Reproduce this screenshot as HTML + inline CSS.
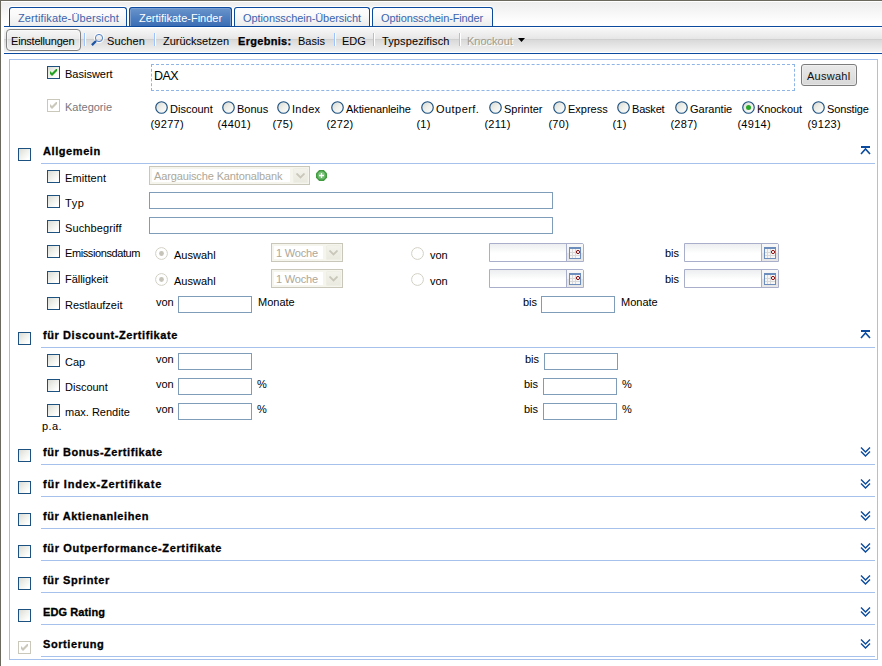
<!DOCTYPE html>
<html lang="de"><head><meta charset="utf-8"><title>Zertifikate-Finder</title>
<style>
html,body{margin:0;padding:0;background:#fff;}
body{width:882px;height:666px;overflow:hidden;position:relative;font-family:"Liberation Sans", sans-serif;font-size:11px;color:#000;}
div,span.t,svg{position:absolute;box-sizing:border-box;}
span.t{white-space:nowrap;}
.cb{width:13px;height:13px;border:1px solid #1c5180;background:linear-gradient(135deg,#dcdcd6 0%,#efefeb 45%,#ffffff 85%);}
.cbd{width:13px;height:13px;border:1px solid #cac8bb;background:#fff;}
.rb{width:13px;height:13px;}
.in{border:1px solid #7f9db9;background:#fff;}
.sel{border:1px solid #c9c7ba;background:#fff;}
.df{border-radius:0 2px 0 0;border:1px solid #a9aeca;background:linear-gradient(#eceeef 0%,#ffffff 55%);}
.sl{height:1px;background:#a6c2ec;left:41px;width:834px;}
.tab{top:7px;height:20px;border:1px solid #0b4a9c;border-bottom:none;border-radius:3px 3px 0 0;background:linear-gradient(#fdfdfd 0%,#fafafa 35%,#ebebeb 100%);box-shadow:0 0 0 1px #fff;}
.tab.act{background:linear-gradient(#6b95cb 0%,#4f7fc0 50%,#3a6cb4 100%);box-shadow:0 0 0 1px #fff, inset 0 0 0 1px #7aa0d3;}
.sep{background:#9cc3fa;box-shadow:1px 0 0 #fff;}
</style></head><body>
<div style="left:0px;top:0px;width:882px;height:666px;background:#fff;"></div>
<div style="left:1px;top:1px;width:881px;height:26px;background:linear-gradient(#ffffff 0px,#ffffff 1px,#eeeeee 1px,#f6f6f6 11px,#ffffff 22px);"></div>
<div style="left:0px;top:0px;width:882px;height:1px;background:#6b695d;"></div>
<div style="left:0px;top:0px;width:1px;height:666px;background:#6b695d;"></div>
<div class="tab" style="left:9px;top:7px;width:118px;height:20px;"></div>
<span class="t" style="left:18px;top:11px;font-size:11px;line-height:14px;color:#3b64ae;letter-spacing:0.12px;">Zertifikate-Übersicht</span>
<div class="tab act" style="left:129px;top:7px;width:103px;height:20px;"></div>
<span class="t" style="left:139px;top:11px;font-size:11px;line-height:14px;color:#fff;">Zertifikate-Finder</span>
<div class="tab" style="left:234px;top:7px;width:136px;height:20px;"></div>
<span class="t" style="left:243px;top:11px;font-size:11px;line-height:14px;color:#3b64ae;letter-spacing:-0.08px;">Optionsschein-Übersicht</span>
<div class="tab" style="left:372px;top:7px;width:121px;height:20px;"></div>
<span class="t" style="left:381px;top:11px;font-size:11px;line-height:14px;color:#3b64ae;letter-spacing:-0.12px;">Optionsschein-Finder</span>
<div style="left:4px;top:26px;width:878px;height:1px;background:#0b4a9c;"></div>
<div style="left:4px;top:27px;width:878px;height:26px;background:linear-gradient(#ffffff 0px,#ffffff 1px,#f8f8f8 1px,#e6e6e6 12px,#d0d0d0 12px,#d0d0d0 13px,#d9d9d9 13px,#f3f3f3 25px,#ffffff 25px);"></div>
<div style="left:4px;top:53px;width:878px;height:1px;background:#0b4a9c;"></div>
<div style="left:6px;top:29px;width:75px;height:22px;border:1px solid #838383;border-radius:4px;background:rgba(255,255,255,.18);box-shadow:inset 0 0 0 1px rgba(255,255,255,.45);"></div>
<span class="t" style="left:11px;top:34px;font-size:11px;line-height:14px;letter-spacing:-0.2px;">Einstellungen</span>
<div class="sep" style="left:84px;top:33px;width:1px;height:13px;"></div>
<svg style="left:90px;top:33px" width="14" height="14" viewBox="0 0 14 14"><circle cx="9" cy="5" r="4.6" fill="none" stroke="#fff" stroke-width="1.2" opacity=".8"/><circle cx="9" cy="5" r="3.6" fill="rgba(255,255,255,.25)" stroke="#4a7dc4" stroke-width="0.95"/><path d="M6 8 L1.9 12.1" stroke="#1f55a5" stroke-width="2.3"/></svg>
<span class="t" style="left:107px;top:34px;font-size:11px;line-height:14px;letter-spacing:0.1px;">Suchen</span>
<div class="sep" style="left:154px;top:33px;width:1px;height:13px;"></div>
<span class="t" style="left:163px;top:34px;font-size:11px;line-height:14px;">Zurücksetzen</span>
<span class="t" style="left:238px;top:34px;font-size:11px;line-height:14px;font-weight:bold;letter-spacing:0.3px;-webkit-text-stroke:0.25px #000;">Ergebnis:</span>
<span class="t" style="left:298px;top:34px;font-size:11px;line-height:14px;">Basis</span>
<div class="sep" style="left:334px;top:33px;width:1px;height:13px;"></div>
<span class="t" style="left:342px;top:34px;font-size:11px;line-height:14px;">EDG</span>
<div class="sep" style="left:373px;top:33px;width:1px;height:13px;"></div>
<span class="t" style="left:382px;top:34px;font-size:11px;line-height:14px;letter-spacing:0.12px;">Typspezifisch</span>
<div class="sep" style="left:459px;top:33px;width:1px;height:13px;"></div>
<span class="t" style="left:467px;top:34px;font-size:11px;line-height:14px;color:#a19d8b;text-shadow:1px 1px 0 #fff;">Knockout</span>
<svg style="left:518px;top:38px" width="8" height="5" viewBox="0 0 8 5"><path d="M0 0 H7 L3.5 4 Z" fill="#000"/></svg>
<div style="left:9px;top:59px;width:869px;height:601px;border:1px solid #a6c2ec;background:#fff;"></div>
<div class="cb" style="left:47px;top:66px;width:13px;height:13px;"><svg style="left:2px;top:2px" width="7" height="7" viewBox="0 0 7 7"><path d="M0 2v3l2 2 5-5V-1L2 4z" fill="#21a121"/></svg></div>
<span class="t" style="left:65px;top:67px;font-size:11px;line-height:14px;">Basiswert</span>
<div style="left:151px;top:64px;width:644px;height:27px;border:1px dashed #8fb4e6;"></div>
<span class="t" style="left:154px;top:69px;font-size:12.5px;line-height:15px;letter-spacing:-0.5px;">DAX</span>
<div style="left:801px;top:64px;width:56px;height:22px;border:1px solid #7c7c7c;border-radius:3px;background:linear-gradient(#e9e9e9 0%,#e1e1e1 50%,#d8d8d8 100%);box-shadow:inset 0 0 0 1px rgba(255,255,255,.35);"></div>
<span class="t" style="left:807px;top:69px;font-size:11px;line-height:14px;color:#111;letter-spacing:0.25px;">Auswahl</span>
<div class="cbd" style="left:47px;top:99px;width:13px;height:13px;"><svg style="left:2px;top:2px" width="7" height="7" viewBox="0 0 7 7"><path d="M0 2v3l2 2 5-5V-1L2 4z" fill="#cac8bb"/></svg></div>
<span class="t" style="left:65px;top:100px;font-size:11px;line-height:14px;color:#777780;">Kategorie</span>
<svg class="rb" style="left:155px;top:101px" width="13" height="13" viewBox="0 0 13 13"><defs><linearGradient id="rg155" x1="0" y1="0" x2="1" y2="1"><stop offset="0" stop-color="#d8d8d2"/><stop offset=".5" stop-color="#efefeb"/><stop offset="1" stop-color="#fff"/></linearGradient></defs><circle cx="6.5" cy="6.5" r="5.75" fill="url(#rg155)" stroke="#1c5180" stroke-width="1.15"/></svg>
<span class="t" style="left:170px;top:102px;font-size:11px;line-height:14px;">Discount</span>
<span class="t" style="left:150.4px;top:117px;font-size:11px;line-height:14px;letter-spacing:0.3px;">(9277)</span>
<svg class="rb" style="left:222px;top:101px" width="13" height="13" viewBox="0 0 13 13"><defs><linearGradient id="rg222" x1="0" y1="0" x2="1" y2="1"><stop offset="0" stop-color="#d8d8d2"/><stop offset=".5" stop-color="#efefeb"/><stop offset="1" stop-color="#fff"/></linearGradient></defs><circle cx="6.5" cy="6.5" r="5.75" fill="url(#rg222)" stroke="#1c5180" stroke-width="1.15"/></svg>
<span class="t" style="left:237px;top:102px;font-size:11px;line-height:14px;">Bonus</span>
<span class="t" style="left:217.4px;top:117px;font-size:11px;line-height:14px;letter-spacing:0.3px;">(4401)</span>
<svg class="rb" style="left:277px;top:101px" width="13" height="13" viewBox="0 0 13 13"><defs><linearGradient id="rg277" x1="0" y1="0" x2="1" y2="1"><stop offset="0" stop-color="#d8d8d2"/><stop offset=".5" stop-color="#efefeb"/><stop offset="1" stop-color="#fff"/></linearGradient></defs><circle cx="6.5" cy="6.5" r="5.75" fill="url(#rg277)" stroke="#1c5180" stroke-width="1.15"/></svg>
<span class="t" style="left:292px;top:102px;font-size:11px;line-height:14px;letter-spacing:0.3px;">Index</span>
<span class="t" style="left:272.4px;top:117px;font-size:11px;line-height:14px;letter-spacing:0.3px;">(75)</span>
<svg class="rb" style="left:331px;top:101px" width="13" height="13" viewBox="0 0 13 13"><defs><linearGradient id="rg331" x1="0" y1="0" x2="1" y2="1"><stop offset="0" stop-color="#d8d8d2"/><stop offset=".5" stop-color="#efefeb"/><stop offset="1" stop-color="#fff"/></linearGradient></defs><circle cx="6.5" cy="6.5" r="5.75" fill="url(#rg331)" stroke="#1c5180" stroke-width="1.15"/></svg>
<span class="t" style="left:346px;top:102px;font-size:11px;line-height:14px;letter-spacing:-0.1px;">Aktienanleihe</span>
<span class="t" style="left:326.4px;top:117px;font-size:11px;line-height:14px;letter-spacing:0.3px;">(272)</span>
<svg class="rb" style="left:421px;top:101px" width="13" height="13" viewBox="0 0 13 13"><defs><linearGradient id="rg421" x1="0" y1="0" x2="1" y2="1"><stop offset="0" stop-color="#d8d8d2"/><stop offset=".5" stop-color="#efefeb"/><stop offset="1" stop-color="#fff"/></linearGradient></defs><circle cx="6.5" cy="6.5" r="5.75" fill="url(#rg421)" stroke="#1c5180" stroke-width="1.15"/></svg>
<span class="t" style="left:436px;top:102px;font-size:11px;line-height:14px;letter-spacing:0.45px;">Outperf.</span>
<span class="t" style="left:416.4px;top:117px;font-size:11px;line-height:14px;letter-spacing:0.3px;">(1)</span>
<svg class="rb" style="left:489px;top:101px" width="13" height="13" viewBox="0 0 13 13"><defs><linearGradient id="rg489" x1="0" y1="0" x2="1" y2="1"><stop offset="0" stop-color="#d8d8d2"/><stop offset=".5" stop-color="#efefeb"/><stop offset="1" stop-color="#fff"/></linearGradient></defs><circle cx="6.5" cy="6.5" r="5.75" fill="url(#rg489)" stroke="#1c5180" stroke-width="1.15"/></svg>
<span class="t" style="left:504px;top:102px;font-size:11px;line-height:14px;">Sprinter</span>
<span class="t" style="left:484.4px;top:117px;font-size:11px;line-height:14px;letter-spacing:0.3px;">(211)</span>
<svg class="rb" style="left:553px;top:101px" width="13" height="13" viewBox="0 0 13 13"><defs><linearGradient id="rg553" x1="0" y1="0" x2="1" y2="1"><stop offset="0" stop-color="#d8d8d2"/><stop offset=".5" stop-color="#efefeb"/><stop offset="1" stop-color="#fff"/></linearGradient></defs><circle cx="6.5" cy="6.5" r="5.75" fill="url(#rg553)" stroke="#1c5180" stroke-width="1.15"/></svg>
<span class="t" style="left:568px;top:102px;font-size:11px;line-height:14px;">Express</span>
<span class="t" style="left:548.4px;top:117px;font-size:11px;line-height:14px;letter-spacing:0.3px;">(70)</span>
<svg class="rb" style="left:617px;top:101px" width="13" height="13" viewBox="0 0 13 13"><defs><linearGradient id="rg617" x1="0" y1="0" x2="1" y2="1"><stop offset="0" stop-color="#d8d8d2"/><stop offset=".5" stop-color="#efefeb"/><stop offset="1" stop-color="#fff"/></linearGradient></defs><circle cx="6.5" cy="6.5" r="5.75" fill="url(#rg617)" stroke="#1c5180" stroke-width="1.15"/></svg>
<span class="t" style="left:632px;top:102px;font-size:11px;line-height:14px;letter-spacing:-0.2px;">Basket</span>
<span class="t" style="left:612.4px;top:117px;font-size:11px;line-height:14px;letter-spacing:0.3px;">(1)</span>
<svg class="rb" style="left:675px;top:101px" width="13" height="13" viewBox="0 0 13 13"><defs><linearGradient id="rg675" x1="0" y1="0" x2="1" y2="1"><stop offset="0" stop-color="#d8d8d2"/><stop offset=".5" stop-color="#efefeb"/><stop offset="1" stop-color="#fff"/></linearGradient></defs><circle cx="6.5" cy="6.5" r="5.75" fill="url(#rg675)" stroke="#1c5180" stroke-width="1.15"/></svg>
<span class="t" style="left:690px;top:102px;font-size:11px;line-height:14px;">Garantie</span>
<span class="t" style="left:670.4px;top:117px;font-size:11px;line-height:14px;letter-spacing:0.3px;">(287)</span>
<svg class="rb" style="left:742px;top:101px" width="13" height="13" viewBox="0 0 13 13"><defs><linearGradient id="rg742" x1="0" y1="0" x2="1" y2="1"><stop offset="0" stop-color="#d8d8d2"/><stop offset=".5" stop-color="#efefeb"/><stop offset="1" stop-color="#fff"/></linearGradient></defs><circle cx="6.5" cy="6.5" r="5.75" fill="url(#rg742)" stroke="#1c5180" stroke-width="1.15"/><circle cx="6.5" cy="6.5" r="2.5" fill="#27a827"/></svg>
<span class="t" style="left:757px;top:102px;font-size:11px;line-height:14px;letter-spacing:-0.12px;">Knockout</span>
<span class="t" style="left:737.4px;top:117px;font-size:11px;line-height:14px;letter-spacing:0.3px;">(4914)</span>
<svg class="rb" style="left:812px;top:101px" width="13" height="13" viewBox="0 0 13 13"><defs><linearGradient id="rg812" x1="0" y1="0" x2="1" y2="1"><stop offset="0" stop-color="#d8d8d2"/><stop offset=".5" stop-color="#efefeb"/><stop offset="1" stop-color="#fff"/></linearGradient></defs><circle cx="6.5" cy="6.5" r="5.75" fill="url(#rg812)" stroke="#1c5180" stroke-width="1.15"/></svg>
<span class="t" style="left:827px;top:102px;font-size:11px;line-height:14px;letter-spacing:-0.12px;">Sonstige</span>
<span class="t" style="left:807.4px;top:117px;font-size:11px;line-height:14px;letter-spacing:0.3px;">(9123)</span>
<div class="cb" style="left:18px;top:148px;width:13px;height:13px;"></div>
<span class="t" style="left:43px;top:144px;font-size:11px;line-height:14px;font-weight:bold;letter-spacing:0.58px;-webkit-text-stroke:0.3px #000;">Allgemein</span>
<div class="sl" style="top:163px"></div>
<svg style="left:860px;top:146px" width="11" height="11" viewBox="0 0 11 11"><path d="M1 0 H10 V2 H1 Z" fill="#0b4a9c"/><path d="M1 8 L5.5 3 L10 8" fill="none" stroke="#0b4a9c" stroke-width="1.6"/></svg>
<div class="cb" style="left:47px;top:170px;width:13px;height:13px;"></div>
<span class="t" style="left:65px;top:171px;font-size:11px;line-height:14px;letter-spacing:0.1px;">Emittent</span>
<div class="cb" style="left:47px;top:195px;width:13px;height:13px;"></div>
<span class="t" style="left:65px;top:196px;font-size:11px;line-height:14px;letter-spacing:0.6px;">Typ</span>
<div class="cb" style="left:47px;top:220px;width:13px;height:13px;"></div>
<span class="t" style="left:65px;top:221px;font-size:11px;line-height:14px;letter-spacing:0.1px;">Suchbegriff</span>
<div class="cb" style="left:47px;top:245px;width:13px;height:13px;"></div>
<span class="t" style="left:65px;top:246px;font-size:11px;line-height:14px;letter-spacing:-0.4px;">Emissionsdatum</span>
<div class="cb" style="left:47px;top:271px;width:13px;height:13px;"></div>
<span class="t" style="left:65px;top:272px;font-size:11px;line-height:14px;letter-spacing:-0.05px;">Fälligkeit</span>
<div class="cb" style="left:47px;top:297px;width:13px;height:13px;"></div>
<span class="t" style="left:65px;top:298px;font-size:11px;line-height:14px;">Restlaufzeit</span>
<div class="sel" style="left:149px;top:166px;width:161px;height:19px;"></div>
<div style="left:150px;top:167px;width:159px;height:17px;background:#f6f5ed;"></div>
<div style="left:152px;top:169px;width:138px;height:13px;background:#fff;"></div>
<div style="left:293px;top:168px;width:15px;height:15px;background:linear-gradient(#f4f3ec,#eae9df);border-radius:2px;box-shadow:inset 0 0 0 1px #efeee5;"></div>
<svg style="left:296px;top:173px" width="9" height="6" viewBox="0 0 9 6"><path d="M0.5 0.5 L4.5 4.5 L8.5 0.5" fill="none" stroke="#c9c7ba" stroke-width="1.8"/></svg>
<span class="t" style="left:154px;top:169px;font-size:11px;line-height:14px;color:#aca899;letter-spacing:-0.13px;">Aargauische Kantonalbank</span>
<svg style="left:316px;top:170px" width="11" height="11" viewBox="0 0 11 11"><polygon points="3.2,0 7.8,0 11,3.2 11,7.8 7.8,11 3.2,11 0,7.8 0,3.2" fill="#3f9c3f"/><circle cx="5.5" cy="5.5" r="4.1" fill="#6cb86c"/><circle cx="5.5" cy="4.6" r="3" fill="#80c480" opacity=".7"/><path d="M5.5 3v5M3 5.5h5" stroke="#fff" stroke-width="1.3"/></svg>
<div class="in" style="left:149px;top:192px;width:404px;height:17px;"></div>
<div class="in" style="left:149px;top:217px;width:404px;height:17px;"></div>
<svg class="rb" style="left:155px;top:247px" width="13" height="13" viewBox="0 0 13 13"><circle cx="6.5" cy="6.5" r="5.9" fill="#fff" stroke="#d2d0c4" stroke-width="1"/><circle cx="6.5" cy="6.5" r="2.4" fill="#c6c4b8"/></svg>
<span class="t" style="left:174px;top:248px;font-size:11px;line-height:14px;">Auswahl</span>
<div class="sel" style="left:271px;top:243px;width:72px;height:19px;"></div>
<div style="left:272px;top:244px;width:70px;height:17px;background:#f6f5ed;"></div>
<div style="left:274px;top:246px;width:49px;height:13px;background:#fff;"></div>
<div style="left:326px;top:245px;width:15px;height:15px;background:linear-gradient(#f4f3ec,#eae9df);border-radius:2px;box-shadow:inset 0 0 0 1px #efeee5;"></div>
<svg style="left:329px;top:250px" width="9" height="6" viewBox="0 0 9 6"><path d="M0.5 0.5 L4.5 4.5 L8.5 0.5" fill="none" stroke="#c9c7ba" stroke-width="1.8"/></svg>
<span class="t" style="left:276px;top:246px;font-size:11px;line-height:14px;color:#aca899;letter-spacing:-0.2px;">1 Woche</span>
<svg class="rb" style="left:411px;top:247px" width="13" height="13" viewBox="0 0 13 13"><circle cx="6.5" cy="6.5" r="5.9" fill="#fff" stroke="#d2d0c4" stroke-width="1"/></svg>
<span class="t" style="left:430px;top:248px;font-size:11px;line-height:14px;">von</span>
<div class="df" style="left:489px;top:243px;width:95px;height:19px;"></div>
<div style="left:566px;top:243px;width:1px;height:19px;background:#a9aeca;"></div>
<div style="left:567px;top:244px;width:16px;height:17px;background:linear-gradient(#f8f8f8 0%,#f0f0f0 50%,#e2e2e2 52%,#e8e8e8 100%);"></div>
<svg style="left:569px;top:247px" width="12" height="12" viewBox="0 0 12 12"><rect x="0.5" y="0.5" width="11" height="11" fill="#f6f6f6" stroke="#6d8dbd"/><rect x="0" y="0" width="12" height="2" fill="#6d8dbd"/><path d="M1 5.5h10M1 8.5h10M3.5 2v9M6.5 2v9" stroke="#d8d8d8" stroke-width="1"/><circle cx="9" cy="5" r="1.6" fill="#fff" stroke="#8b0a0a" stroke-width="1"/></svg>
<span class="t" style="left:665px;top:246px;font-size:11px;line-height:14px;">bis</span>
<div class="df" style="left:684px;top:243px;width:95px;height:19px;"></div>
<div style="left:761px;top:243px;width:1px;height:19px;background:#a9aeca;"></div>
<div style="left:762px;top:244px;width:16px;height:17px;background:linear-gradient(#f8f8f8 0%,#f0f0f0 50%,#e2e2e2 52%,#e8e8e8 100%);"></div>
<svg style="left:764px;top:247px" width="12" height="12" viewBox="0 0 12 12"><rect x="0.5" y="0.5" width="11" height="11" fill="#f6f6f6" stroke="#6d8dbd"/><rect x="0" y="0" width="12" height="2" fill="#6d8dbd"/><path d="M1 5.5h10M1 8.5h10M3.5 2v9M6.5 2v9" stroke="#d8d8d8" stroke-width="1"/><circle cx="9" cy="5" r="1.6" fill="#fff" stroke="#8b0a0a" stroke-width="1"/></svg>
<svg class="rb" style="left:155px;top:273px" width="13" height="13" viewBox="0 0 13 13"><circle cx="6.5" cy="6.5" r="5.9" fill="#fff" stroke="#d2d0c4" stroke-width="1"/><circle cx="6.5" cy="6.5" r="2.4" fill="#c6c4b8"/></svg>
<span class="t" style="left:174px;top:274px;font-size:11px;line-height:14px;">Auswahl</span>
<div class="sel" style="left:271px;top:269px;width:72px;height:19px;"></div>
<div style="left:272px;top:270px;width:70px;height:17px;background:#f6f5ed;"></div>
<div style="left:274px;top:272px;width:49px;height:13px;background:#fff;"></div>
<div style="left:326px;top:271px;width:15px;height:15px;background:linear-gradient(#f4f3ec,#eae9df);border-radius:2px;box-shadow:inset 0 0 0 1px #efeee5;"></div>
<svg style="left:329px;top:276px" width="9" height="6" viewBox="0 0 9 6"><path d="M0.5 0.5 L4.5 4.5 L8.5 0.5" fill="none" stroke="#c9c7ba" stroke-width="1.8"/></svg>
<span class="t" style="left:276px;top:272px;font-size:11px;line-height:14px;color:#aca899;letter-spacing:-0.2px;">1 Woche</span>
<svg class="rb" style="left:411px;top:273px" width="13" height="13" viewBox="0 0 13 13"><circle cx="6.5" cy="6.5" r="5.9" fill="#fff" stroke="#d2d0c4" stroke-width="1"/></svg>
<span class="t" style="left:430px;top:274px;font-size:11px;line-height:14px;">von</span>
<div class="df" style="left:489px;top:269px;width:95px;height:19px;"></div>
<div style="left:566px;top:269px;width:1px;height:19px;background:#a9aeca;"></div>
<div style="left:567px;top:270px;width:16px;height:17px;background:linear-gradient(#f8f8f8 0%,#f0f0f0 50%,#e2e2e2 52%,#e8e8e8 100%);"></div>
<svg style="left:569px;top:273px" width="12" height="12" viewBox="0 0 12 12"><rect x="0.5" y="0.5" width="11" height="11" fill="#f6f6f6" stroke="#6d8dbd"/><rect x="0" y="0" width="12" height="2" fill="#6d8dbd"/><path d="M1 5.5h10M1 8.5h10M3.5 2v9M6.5 2v9" stroke="#d8d8d8" stroke-width="1"/><circle cx="9" cy="5" r="1.6" fill="#fff" stroke="#8b0a0a" stroke-width="1"/></svg>
<span class="t" style="left:665px;top:272px;font-size:11px;line-height:14px;">bis</span>
<div class="df" style="left:684px;top:269px;width:95px;height:19px;"></div>
<div style="left:761px;top:269px;width:1px;height:19px;background:#a9aeca;"></div>
<div style="left:762px;top:270px;width:16px;height:17px;background:linear-gradient(#f8f8f8 0%,#f0f0f0 50%,#e2e2e2 52%,#e8e8e8 100%);"></div>
<svg style="left:764px;top:273px" width="12" height="12" viewBox="0 0 12 12"><rect x="0.5" y="0.5" width="11" height="11" fill="#f6f6f6" stroke="#6d8dbd"/><rect x="0" y="0" width="12" height="2" fill="#6d8dbd"/><path d="M1 5.5h10M1 8.5h10M3.5 2v9M6.5 2v9" stroke="#d8d8d8" stroke-width="1"/><circle cx="9" cy="5" r="1.6" fill="#fff" stroke="#8b0a0a" stroke-width="1"/></svg>
<span class="t" style="left:156px;top:295px;font-size:11px;line-height:14px;">von</span>
<div class="in" style="left:178px;top:296px;width:74px;height:17px;"></div>
<span class="t" style="left:258px;top:295px;font-size:11px;line-height:14px;">Monate</span>
<span class="t" style="left:523px;top:295px;font-size:11px;line-height:14px;">bis</span>
<div class="in" style="left:541px;top:296px;width:74px;height:17px;"></div>
<span class="t" style="left:621px;top:295px;font-size:11px;line-height:14px;">Monate</span>
<div class="cb" style="left:18px;top:332px;width:13px;height:13px;"></div>
<span class="t" style="left:43px;top:328px;font-size:11px;line-height:14px;font-weight:bold;letter-spacing:0.58px;-webkit-text-stroke:0.3px #000;">für Discount-Zertifikate</span>
<div class="sl" style="top:347px"></div>
<svg style="left:860px;top:330px" width="11" height="11" viewBox="0 0 11 11"><path d="M1 0 H10 V2 H1 Z" fill="#0b4a9c"/><path d="M1 8 L5.5 3 L10 8" fill="none" stroke="#0b4a9c" stroke-width="1.6"/></svg>
<div class="cb" style="left:47px;top:354px;width:13px;height:13px;"></div>
<span class="t" style="left:65px;top:355px;font-size:11px;line-height:14px;">Cap</span>
<span class="t" style="left:156px;top:352px;font-size:11px;line-height:14px;">von</span>
<div class="in" style="left:178px;top:353px;width:74px;height:17px;"></div>
<span class="t" style="left:525px;top:352px;font-size:11px;line-height:14px;">bis</span>
<div class="in" style="left:544px;top:353px;width:74px;height:17px;"></div>
<div class="cb" style="left:47px;top:379px;width:13px;height:13px;"></div>
<span class="t" style="left:65px;top:380px;font-size:11px;line-height:14px;">Discount</span>
<span class="t" style="left:156px;top:377px;font-size:11px;line-height:14px;">von</span>
<div class="in" style="left:178px;top:378px;width:74px;height:17px;"></div>
<span class="t" style="left:524px;top:377px;font-size:11px;line-height:14px;">bis</span>
<div class="in" style="left:543px;top:378px;width:74px;height:17px;"></div>
<span class="t" style="left:257px;top:377px;font-size:11px;line-height:14px;">%</span>
<span class="t" style="left:622px;top:377px;font-size:11px;line-height:14px;">%</span>
<div class="cb" style="left:47px;top:404px;width:13px;height:13px;"></div>
<span class="t" style="left:65px;top:405px;font-size:11px;line-height:14px;">max. Rendite</span>
<span class="t" style="left:156px;top:402px;font-size:11px;line-height:14px;">von</span>
<div class="in" style="left:178px;top:403px;width:74px;height:17px;"></div>
<span class="t" style="left:524px;top:402px;font-size:11px;line-height:14px;">bis</span>
<div class="in" style="left:543px;top:403px;width:74px;height:17px;"></div>
<span class="t" style="left:257px;top:402px;font-size:11px;line-height:14px;">%</span>
<span class="t" style="left:622px;top:402px;font-size:11px;line-height:14px;">%</span>
<span class="t" style="left:42px;top:419px;font-size:11px;line-height:14px;letter-spacing:0.4px;">p.a.</span>
<div class="cb" style="left:18px;top:449px;width:13px;height:13px;"></div>
<span class="t" style="left:43px;top:445px;font-size:11px;line-height:14px;font-weight:bold;letter-spacing:0.55px;-webkit-text-stroke:0.3px #000;">für Bonus-Zertifikate</span>
<div class="sl" style="top:464px"></div>
<svg style="left:860px;top:447px" width="11" height="11" viewBox="0 0 11 11"><path d="M1 0.5 L5.5 5 L10 0.5 M1 4.5 L5.5 9 L10 4.5" fill="none" stroke="#0b4a9c" stroke-width="1.4"/></svg>
<div class="cb" style="left:18px;top:481px;width:13px;height:13px;"></div>
<span class="t" style="left:43px;top:477px;font-size:11px;line-height:14px;font-weight:bold;letter-spacing:0.78px;-webkit-text-stroke:0.3px #000;">für Index-Zertifikate</span>
<div class="sl" style="top:496px"></div>
<svg style="left:860px;top:479px" width="11" height="11" viewBox="0 0 11 11"><path d="M1 0.5 L5.5 5 L10 0.5 M1 4.5 L5.5 9 L10 4.5" fill="none" stroke="#0b4a9c" stroke-width="1.4"/></svg>
<div class="cb" style="left:18px;top:513px;width:13px;height:13px;"></div>
<span class="t" style="left:43px;top:509px;font-size:11px;line-height:14px;font-weight:bold;letter-spacing:0.58px;-webkit-text-stroke:0.3px #000;">für Aktienanleihen</span>
<div class="sl" style="top:528px"></div>
<svg style="left:860px;top:511px" width="11" height="11" viewBox="0 0 11 11"><path d="M1 0.5 L5.5 5 L10 0.5 M1 4.5 L5.5 9 L10 4.5" fill="none" stroke="#0b4a9c" stroke-width="1.4"/></svg>
<div class="cb" style="left:18px;top:545px;width:13px;height:13px;"></div>
<span class="t" style="left:43px;top:541px;font-size:11px;line-height:14px;font-weight:bold;letter-spacing:0.65px;-webkit-text-stroke:0.3px #000;">für Outperformance-Zertifikate</span>
<div class="sl" style="top:560px"></div>
<svg style="left:860px;top:543px" width="11" height="11" viewBox="0 0 11 11"><path d="M1 0.5 L5.5 5 L10 0.5 M1 4.5 L5.5 9 L10 4.5" fill="none" stroke="#0b4a9c" stroke-width="1.4"/></svg>
<div class="cb" style="left:18px;top:577px;width:13px;height:13px;"></div>
<span class="t" style="left:43px;top:573px;font-size:11px;line-height:14px;font-weight:bold;letter-spacing:0.58px;-webkit-text-stroke:0.3px #000;">für Sprinter</span>
<div class="sl" style="top:592px"></div>
<svg style="left:860px;top:575px" width="11" height="11" viewBox="0 0 11 11"><path d="M1 0.5 L5.5 5 L10 0.5 M1 4.5 L5.5 9 L10 4.5" fill="none" stroke="#0b4a9c" stroke-width="1.4"/></svg>
<div class="cb" style="left:18px;top:609px;width:13px;height:13px;"></div>
<span class="t" style="left:43px;top:605px;font-size:11px;line-height:14px;font-weight:bold;letter-spacing:0.1px;-webkit-text-stroke:0.3px #000;">EDG Rating</span>
<div class="sl" style="top:624px"></div>
<svg style="left:860px;top:607px" width="11" height="11" viewBox="0 0 11 11"><path d="M1 0.5 L5.5 5 L10 0.5 M1 4.5 L5.5 9 L10 4.5" fill="none" stroke="#0b4a9c" stroke-width="1.4"/></svg>
<div class="cbd" style="left:18px;top:641px;width:13px;height:13px;"><svg style="left:2px;top:2px" width="7" height="7" viewBox="0 0 7 7"><path d="M0 2v3l2 2 5-5V-1L2 4z" fill="#cac8bb"/></svg></div>
<span class="t" style="left:43px;top:637px;font-size:11px;line-height:14px;font-weight:bold;letter-spacing:0.58px;-webkit-text-stroke:0.3px #000;">Sortierung</span>
<div class="sl" style="top:656px"></div>
<svg style="left:860px;top:639px" width="11" height="11" viewBox="0 0 11 11"><path d="M1 0.5 L5.5 5 L10 0.5 M1 4.5 L5.5 9 L10 4.5" fill="none" stroke="#0b4a9c" stroke-width="1.4"/></svg>
</body></html>
